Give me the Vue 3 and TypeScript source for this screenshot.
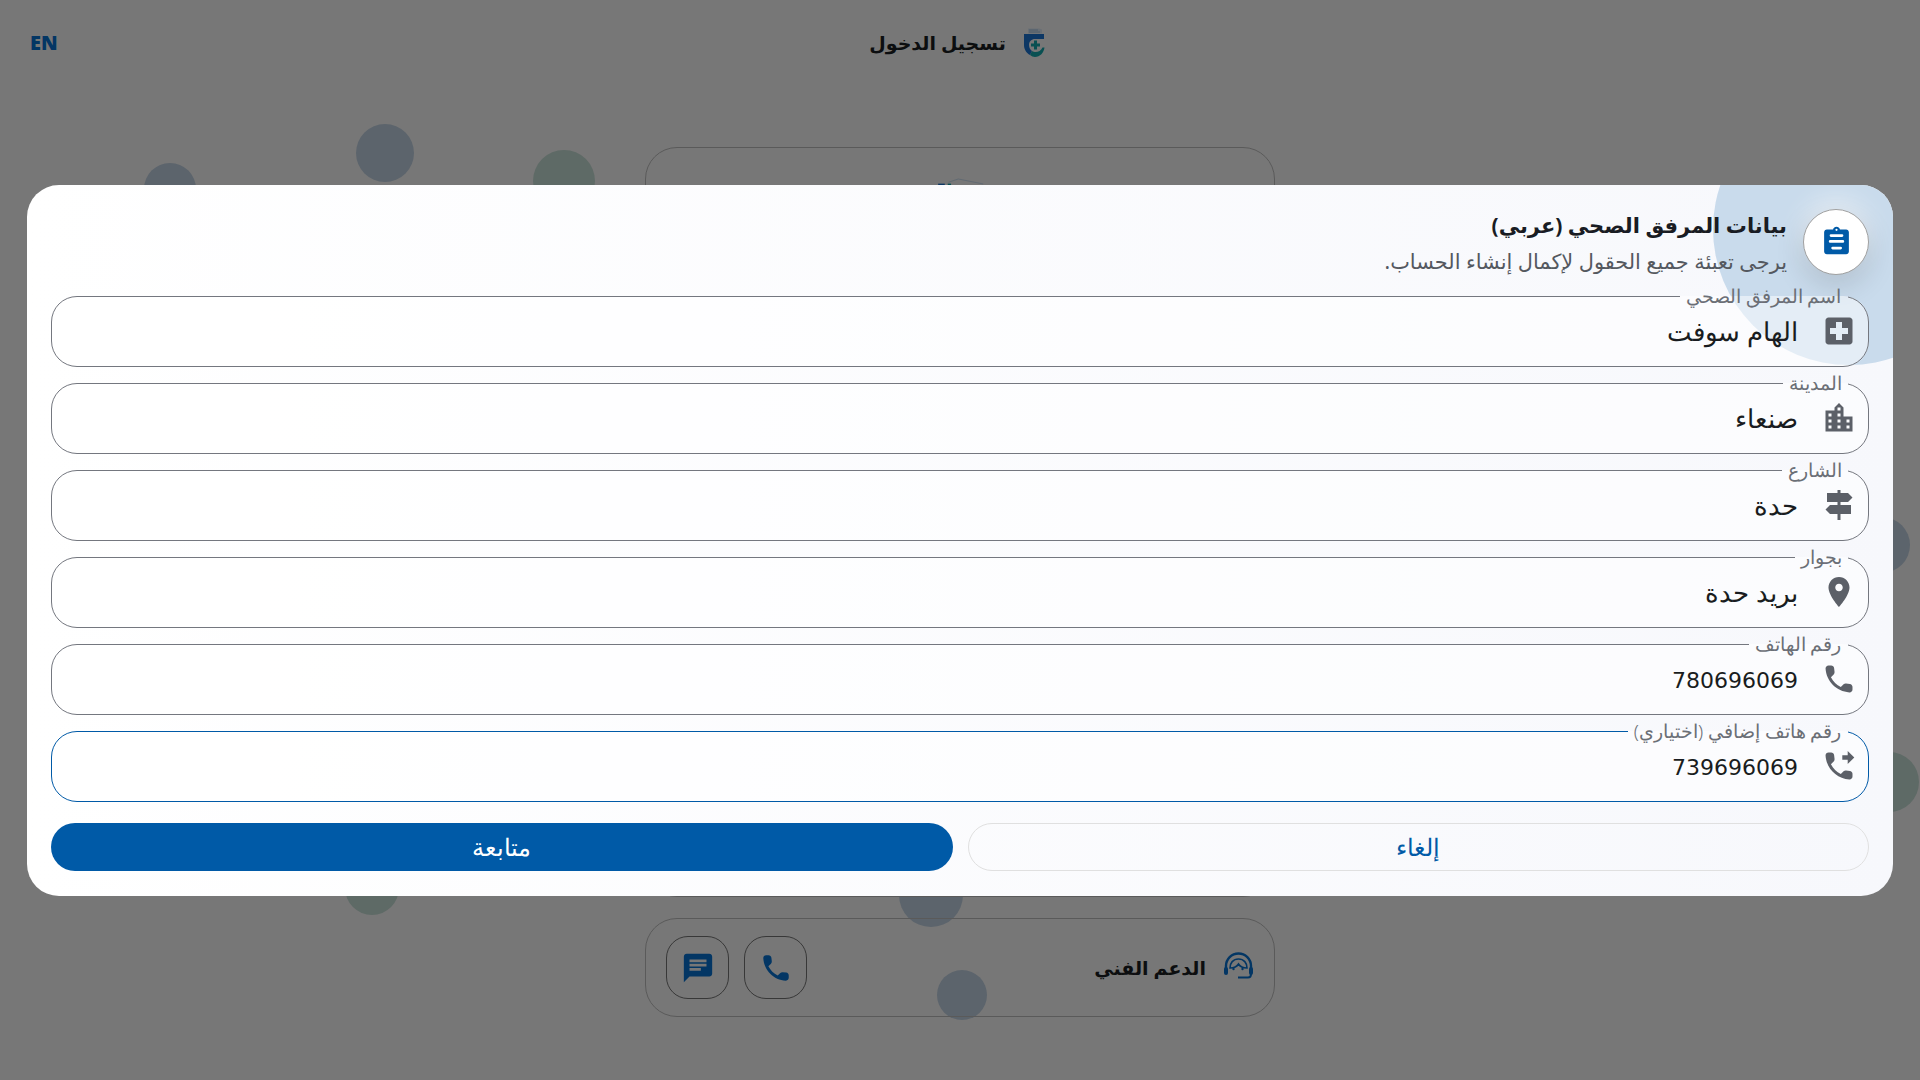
<script setup lang="ts">
interface Field {
  label: string
  value: string
  icon: string
  focused?: boolean
}

const PHONE =
  'M19.23 15.26l-2.54-.29c-.61-.07-1.21.14-1.64.57l-1.84 1.84c-2.83-1.44-5.15-3.75-6.59-6.59l1.85-1.85c.43-.43.64-1.03.57-1.64l-.29-2.52c-.12-1.01-.97-1.77-1.99-1.77H5.03c-1.13 0-2.07.94-2 2.07.53 8.54 7.36 15.36 15.89 15.89 1.13.07 2.07-.87 2.07-2v-1.73c.01-1.01-.75-1.86-1.76-1.98z'

const fields: Field[] = [
  {
    label: 'اسم المرفق الصحي',
    value: 'الهام سوفت',
    icon: 'M19 3H5c-1.1 0-1.99.9-1.99 2L3 19c0 1.1.9 2 2 2h14c1.1 0 2-.9 2-2V5c0-1.1-.9-2-2-2zm-1 11h-4v4h-4v-4H6v-4h4V6h4v4h4v4z'
  },
  {
    label: 'المدينة',
    value: 'صنعاء',
    icon: 'M15 11V5l-3-3-3 3v2H3v14h18V11h-6zm-8 8H5v-2h2v2zm0-4H5v-2h2v2zm0-4H5V9h2v2zm6 8h-2v-2h2v2zm0-4h-2v-2h2v2zm0-4h-2V9h2v2zm0-4h-2V5h2v2zm6 12h-2v-2h2v2zm0-4h-2v-2h2v2z'
  },
  {
    label: 'الشارع',
    value: 'حدة',
    icon: 'M13 10h5l3-3-3-3h-5V2h-2v2H4v6h7v2H6l-3 3 3 3h5v4h2v-4h7v-6h-7v-2z'
  },
  {
    label: 'بجوار',
    value: 'بريد حدة',
    icon: 'M12 2C8.13 2 5 5.13 5 9c0 5.25 7 13 7 13s7-7.75 7-13c0-3.87-3.13-7-7-7zm0 9.5c-1.38 0-2.5-1.12-2.5-2.5s1.12-2.5 2.5-2.5 2.5 1.12 2.5 2.5-1.12 2.5-2.5 2.5z'
  },
  { label: 'رقم الهاتف', value: '780696069', icon: PHONE },
  {
    label: 'رقم هاتف إضافي (اختياري)',
    value: '739696069',
    icon: PHONE + 'M17.8 10.6l4.4-4.3-4.4-4.3v2.9h-3.6v2.9h3.6z',
    focused: true
  }
]

const BLUE = '#b8c8d8'
const GREEN = '#bcd4cc'

const blobs = [
  { x: 170, y: 189, r: 26, c: BLUE },
  { x: 385, y: 153, r: 29, c: BLUE },
  { x: 564, y: 181, r: 31, c: GREEN },
  { x: 372, y: 888, r: 27, c: GREEN },
  { x: 931, y: 895, r: 32, c: BLUE },
  { x: 962, y: 995, r: 25, c: BLUE },
  { x: 1882, y: 545, r: 28, c: BLUE },
  { x: 1889, y: 782, r: 30, c: GREEN }
]

function blobStyle(b: { x: number; y: number; r: number; c: string }) {
  return {
    left: `${b.x - b.r}px`,
    top: `${b.y - b.r}px`,
    width: `${b.r * 2}px`,
    height: `${b.r * 2}px`,
    background: b.c
  }
}

function isNumeric(v: string): boolean {
  return /^\d+$/.test(v)
}
</script>

<template>
  <div class="page" dir="rtl">
    <span v-for="(b, i) in blobs" :key="i" class="blob" :style="blobStyle(b)"></span>

    <header class="topbar">
      <div class="brand">
        <svg class="logo" viewBox="0 0 21 29">
          <path d="M4 0.500h11l3 1v4H4z" fill="#d3deea" />
          <path d="M5 2h9M5 4h11" stroke="#8fb0d0" stroke-width="0.800" fill="none" />
          <path d="M0 6h20v5H11C7.500 11 5 13.500 5 17c0 3 1.500 5 3 6l-2 4C2.500 25 0 21.500 0 17z" fill="#1a6ec8" />
          <path d="M6 27l2-4c1 .7 2.500 1 3.500 1 3 0 5.500-1.500 7-4.500h2C20 24.500 16 29 11 29c-1.800 0-3.500-.7-5-2z" fill="#12a0a4" />
          <path d="M10 12.500h3v3h3v3h-3v3h-3v-3H7v-3h3z" fill="#12a0a4" />
        </svg>
        <span class="brand-text">تسجيل الدخول</span>
      </div>
      <span class="lang">EN</span>
    </header>

    <main class="page-body">
      <section class="bg-card">
        <svg class="card-logo" viewBox="0 0 21 29">
          <path d="M7 1.300l3-1 7.500 1.500" fill="none" stroke="#b9cde2" stroke-width="0.250" />
          <path d="M3.900 1.700h2v4h-2z" fill="#1a6ec8" />
          <path d="M6.800 1.700h1v4h-1z" fill="#12a0a4" />
        </svg>
      </section>
      <section class="support">
        <div class="support-title">
          <svg class="support-icon" viewBox="7 3 32 32" fill="none" stroke="#066dc8">
            <path d="M11 23v-6a12.500 12.500 0 0 1 25 0v6" stroke-width="2.400" />
            <path d="M15 19c0-5 3-9 8.500-9s8.500 4 8.500 9c-4 0-7-1.500-8.500-4-1.500 2.500-4.500 4-8.500 4z" stroke-width="1.600" />
            <path d="M36 25c0 2-1 3.500-3 3.500H23" stroke-width="2" />
            <rect x="9" y="18" width="4" height="8" rx="2" fill="#066dc8" stroke="none" />
            <rect x="34" y="18" width="4" height="8" rx="2" fill="#066dc8" stroke="none" />
            <circle cx="18.500" cy="20" r="1.200" fill="#066dc8" stroke="none" />
            <circle cx="27.500" cy="20" r="1.200" fill="#066dc8" stroke="none" />
          </svg>
          <span>الدعم الفني</span>
        </div>
        <div class="support-actions">
          <button class="round-btn" type="button">
            <svg viewBox="0 0 24 24"><path :d="PHONE" /></svg>
          </button>
          <button class="round-btn" type="button">
            <svg viewBox="0 0 24 24"><path d="M20 2H4c-1.1 0-1.99.9-1.99 2L2 22l4-4h14c1.1 0 2-.9 2-2V4c0-1.1-.9-2-2-2zM6 9h12v2H6V9zm8 5H6v-2h8v2zm4-6H6V6h12v2z" /></svg>
          </button>
        </div>
      </section>
    </main>

    <div class="overlay">
      <div class="modal">
        <span class="deco"></span>
        <div class="modal-head">
          <span class="head-icon">
            <svg viewBox="0 0 24 24">
              <path
                fill-rule="evenodd"
                d="M5 4h4.500C9.800 2.800 10.800 2 12 2s2.200.8 2.500 2H19c1.100 0 2 .9 2 2v14c0 1.100-.9 2-2 2H5c-1.100 0-2-.9-2-2V6c0-1.100.9-2 2-2zm7-.6a.8.800 0 1 0 0 1.600.8.800 0 0 0 0-1.600zM8 7.400a1 1 0 0 0 0 2h8a1 1 0 0 0 0-2H8zm-.6 4.300a1 1 0 0 0 0 2h9.200a1 1 0 0 0 0-2H7.400zm1.800 4.800a1 1 0 0 0 0 2h5.800a1 1 0 0 0 0-2H9.200z"
              />
            </svg>
          </span>
          <div class="head-text">
            <h2>بيانات المرفق الصحي (عربي)</h2>
            <p>يرجى تعبئة جميع الحقول لإكمال إنشاء الحساب.</p>
          </div>
        </div>

        <div class="fields">
          <fieldset v-for="f in fields" :key="f.label" class="field" :class="{ focused: f.focused }">
            <legend>{{ f.label }}</legend>
            <div class="field-row">
              <svg class="field-icon" viewBox="0 0 24 24"><path :d="f.icon" /></svg>
              <span class="field-value" :class="{ numeric: isNumeric(f.value) }">{{ f.value }}</span>
            </div>
          </fieldset>
        </div>

        <div class="actions">
          <button class="btn ghost" type="button">إلغاء</button>
          <button class="btn primary" type="button">متابعة</button>
        </div>
      </div>
    </div>
  </div>
</template>

<style scoped>
.page {
  position: relative;
  width: 1920px;
  height: 1080px;
  overflow: hidden;
  background: #eeeeee;
  font-family: "Noto Sans", "DejaVu Sans", sans-serif;
}
.blob {
  position: absolute;
  border-radius: 50%;
}
.topbar {
  position: relative;
  height: 86px;
  display: flex;
  align-items: center;
  justify-content: center;
}
.brand {
  display: flex;
  align-items: center;
  gap: 18px;
  margin-top: -1px;
  margin-right: 6px;
}
.logo {
  width: 21px;
  height: 29px;
}
.brand-text {
  font-size: 19px;
  font-weight: 600;
  color: #191c20;
}
.lang {
  position: absolute;
  left: 30px;
  top: 29px;
  font-family: "Noto Sans", sans-serif;
  font-weight: 900;
  font-size: 20px;
  color: #066dc8;
}
.page-body {
  position: relative;
  display: flex;
  flex-direction: column;
  align-items: center;
  gap: 21px;
  padding-top: 61px;
}
.bg-card {
  width: 630px;
  height: 750px;
  box-sizing: border-box;
  border: 1.5px solid #b5b5b5;
  border-radius: 32px;
  display: flex;
  justify-content: center;
  padding-top: 30px;
}
.card-logo {
  width: 70px;
  height: 96px;
}
.support {
  width: 630px;
  height: 99px;
  box-sizing: border-box;
  border: 1.5px solid #b5b5b5;
  border-radius: 32px;
  display: flex;
  align-items: center;
  justify-content: space-between;
  padding: 0 20px;
}
.support-title {
  display: flex;
  align-items: center;
  gap: 16px;
  font-size: 19px;
  font-weight: 700;
  color: #191c20;
}
.support-icon {
  width: 32px;
  height: 32px;
}
.support-actions {
  display: flex;
  gap: 15px;
}
.round-btn {
  width: 63px;
  height: 63px;
  padding: 0;
  background: transparent;
  border: 1.5px solid #707070;
  border-radius: 22px;
  display: flex;
  align-items: center;
  justify-content: center;
}
.round-btn svg {
  width: 34px;
  height: 34px;
  fill: #066dc8;
}
.overlay {
  position: absolute;
  inset: 0;
  background: rgba(0, 0, 0, 0.5);
  display: flex;
  align-items: center;
  padding: 0 27px;
}
.modal {
  position: relative;
  overflow: hidden;
  width: 100%;
  box-sizing: border-box;
  padding: 24.500px 24px;
  border-radius: 32px;
  background: linear-gradient(90deg, #ffffff 0%, #f7f8fc 100%);
}
.deco {
  position: absolute;
  right: -92px;
  top: -92px;
  width: 272px;
  height: 272px;
  border-radius: 50%;
  background: #c9dbec;
}
.modal-head {
  position: relative;
  display: flex;
  align-items: center;
  gap: 16px;
  height: 65px;
}
.head-icon {
  width: 66px;
  height: 66px;
  box-sizing: border-box;
  flex: none;
  border-radius: 50%;
  background: #ffffff;
  border: 1.5px solid #a0a0a0;
  box-shadow: 0 10px 30px rgba(0, 0, 0, 0.14), 0 -10px 24px rgba(255, 255, 255, 0.55);
  display: flex;
  align-items: center;
  justify-content: center;
}
.head-icon svg {
  width: 33px;
  height: 33px;
  margin-top: -3px;
  fill: #005aa7;
}
.head-text {
  padding-top: 3px;
}
.head-text h2 {
  margin: 0;
  font-size: 21px;
  line-height: 36px;
  font-weight: 700;
  color: #191c23;
}
.head-text p {
  margin: 0;
  font-size: 20.900px;
  line-height: 36px;
  font-weight: 400;
  color: #54585f;
}
.fields {
  position: relative;
  margin-top: 12px;
  display: flex;
  flex-direction: column;
  gap: 6px;
}
.field {
  margin: 0;
  height: 81px;
  box-sizing: border-box;
  padding: 0 11px 0 0;
  border: 1.5px solid #74777f;
  border-radius: 26px;
  background: rgba(255, 255, 255, 0.5);
}
.field.focused {
  border-color: #005aa7;
}
.field legend {
  margin-right: 9.500px;
  padding: 0 6px;
  font-size: 18.500px;
  line-height: 20px;
  font-weight: 300;
  color: #6b6f76;
}
.field-row {
  height: 50px;
  display: flex;
  align-items: center;
  gap: 23px;
}
.field-icon {
  width: 36px;
  height: 36px;
  flex: none;
  fill: #5c6068;
}
.field-value {
  font-size: 26px;
  font-weight: 300;
  color: #191c20;
}
.field-value.numeric {
  font-family: "DejaVu Sans", sans-serif;
  font-size: 22px;
  font-weight: 400;
  padding-top: 2px;
}
.actions {
  position: relative;
  margin-top: 21px;
  display: grid;
  grid-template-columns: 1fr 1fr;
  gap: 15px;
}
.btn {
  height: 48px;
  border-radius: 24px;
  font-family: inherit;
  font-size: 23.500px;
  font-weight: 300;
  cursor: pointer;
}
.ghost {
  background: transparent;
  border: 1.5px solid #e0e0e0;
  color: #005aa7;
}
.primary {
  background: #005aa7;
  border: none;
  color: #ffffff;
}
</style>
